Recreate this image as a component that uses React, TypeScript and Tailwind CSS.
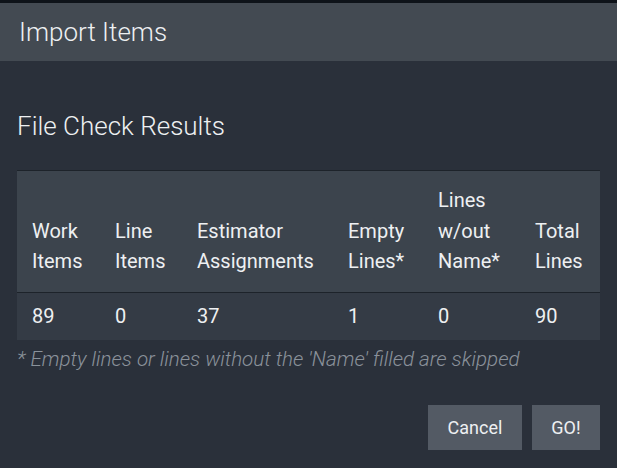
const columns = [
  { label: ["Work", "Items"], value: "89", width: "w-[83px]" },
  { label: ["Line", "Items"], value: "0", width: "w-[82px]" },
  { label: ["Estimator", "Assignments"], value: "37", width: "w-[151px]" },
  { label: ["Empty", "Lines*"], value: "1", width: "w-[90px]" },
  { label: ["Lines", "w/out", "Name*"], value: "0", width: "w-[97px]" },
  { label: ["Total", "Lines"], value: "90", width: "w-[80px]" },
]

export default function App() {
  return (
    <div className="w-[617px] h-[468px] bg-[#2a303a] font-['Roboto',sans-serif] text-[#eef0f2] overflow-hidden">
      <div className="h-[3px] bg-[#0e1319]" />
      <div className="h-[58px] bg-[#434a52] flex items-center px-[19px]">
        <h1 className="text-[26px] font-light leading-none">Import Items</h1>
      </div>

      <div className="px-[17px]">
        <h2 className="mt-[50px] text-[26px] font-light leading-[30px]">File Check Results</h2>

        <table className="mt-[29px] w-[583px] table-fixed border-collapse border-t border-[#1d232a]">
          <colgroup>
            {columns.map((c, i) => (
              <col key={i} className={c.width} />
            ))}
          </colgroup>
          <thead>
            <tr className="bg-[#3c444d] border-b border-[#1d232a]">
              {columns.map((c, i) => (
                <th
                  key={i}
                  className="text-left align-bottom font-normal text-[20px] leading-[30.5px] pl-[15px] pr-0 pt-[14px] pb-[15px]"
                >
                  {c.label.map((l, j) => (
                    <div key={j}>{l}</div>
                  ))}
                </th>
              ))}
            </tr>
          </thead>
          <tbody>
            <tr className="bg-[#343b45]">
              {columns.map((c, i) => (
                <td key={i} className="text-left font-normal text-[20px] leading-[28px] pl-[15px] py-[9.5px]">
                  {c.value}
                </td>
              ))}
            </tr>
          </tbody>
        </table>

        <p className="mt-[5px] text-[20.6px] leading-[28px] italic font-light text-[#8a929b]">
          * Empty lines or lines without the 'Name' filled are skipped
        </p>

        <div className="mt-[32px] flex justify-end gap-[10px]">
          <button className="h-[45px] w-[94px] bg-[#535a64] text-[18px] text-[#eef0f2]">Cancel</button>
          <button className="h-[45px] w-[68px] bg-[#535a64] text-[18px] text-[#eef0f2]">GO!</button>
        </div>
      </div>
    </div>
  )
}
